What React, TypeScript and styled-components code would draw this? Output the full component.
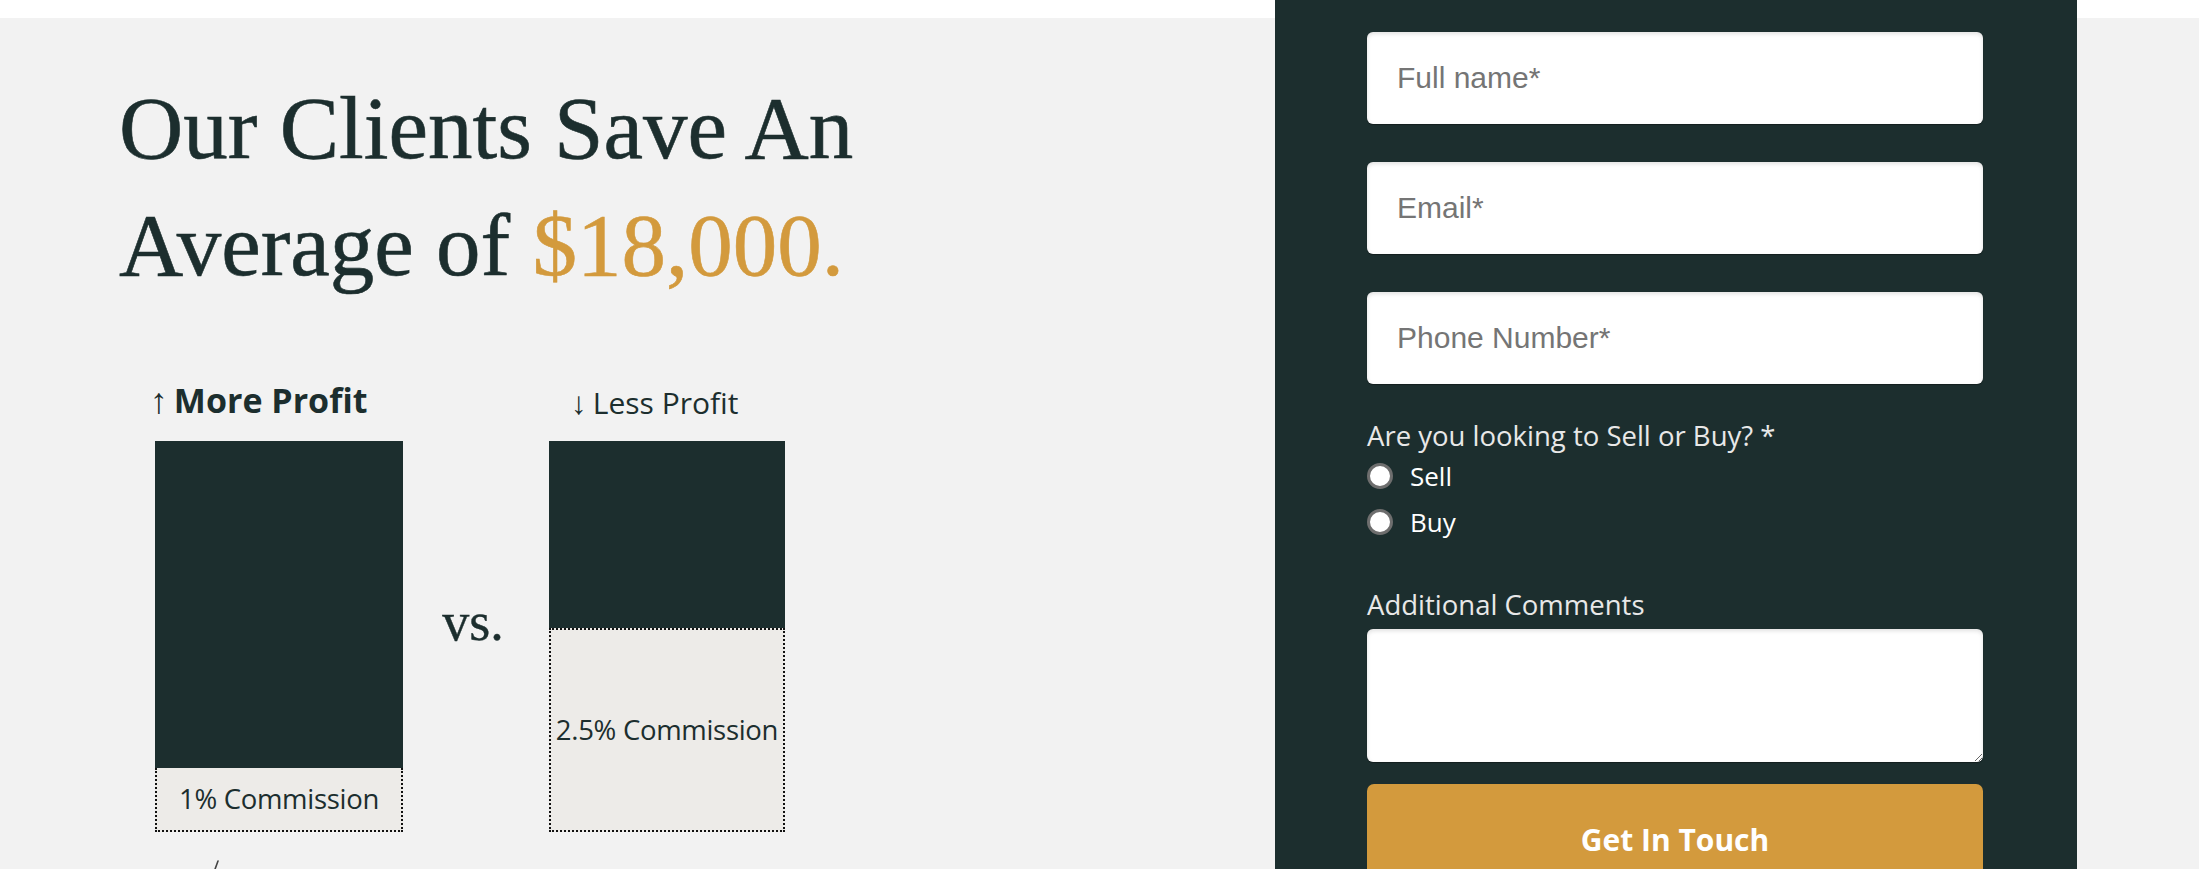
import React from 'react'
import styled, { createGlobalStyle } from 'styled-components'

const GlobalStyle = createGlobalStyle`
  html, body {
    margin: 0;
    padding: 0;
    overflow: hidden;
  }
  * { box-sizing: border-box; }
`

const Page = styled.div`
  display: flex;
  height: 100vh;
  overflow: hidden;
  background: linear-gradient(#ffffff 0 18px, #f2f2f2 18px);
  font-family: "Open Sans", "Noto Sans", sans-serif;
  color: #1c2e2e;
`

const Intro = styled.section`
  flex: 0 0 1275px;
  padding-left: 119px;
`

const Heading = styled.h1`
  margin: 70px 0 0;
  font-family: "Liberation Serif", "Times New Roman", serif;
  font-weight: 400;
  font-size: 89px;
  line-height: 117px;
  color: #1c2e2e;
  -webkit-text-stroke: 0.6px #1c2e2e;
`

const Gold = styled.span`
  color: #d39a3d;
  -webkit-text-stroke: 0.6px #d39a3d;
`

const Chart = styled.div`
  display: grid;
  grid-template-columns: 248px 146px 236px;
  grid-template-rows: auto 391px;
  align-items: end;
  margin: 79px 0 0 36px;
`

const ProfitLabel = styled.div<{ $bold?: boolean; $shift: number }>`
  margin: 0 0 21px ${p => p.$shift}px;
  font-size: ${p => (p.$bold ? 34 : 30)}px;
  font-weight: ${p => (p.$bold ? 700 : 400)};
  line-height: 1;
  white-space: nowrap;
`

const Arrow = styled.span`
  font-family: "Liberation Serif", serif;
  font-weight: 400;
  font-size: 1.05em;
  margin-right: 6px;
`

const Bar = styled.div`
  display: flex;
  flex-direction: column;
  height: 100%;
`

const BarFill = styled.div`
  flex: 1;
  background: #1c2e2e;
`

const Commission = styled.div<{ $height: number; $dottedTop?: boolean }>`
  height: ${p => p.$height}px;
  display: flex;
  align-items: center;
  justify-content: center;
  background: #edebe8;
  border: 2px dotted #111;
  border-top: ${p => (p.$dottedTop ? '2px dotted #111' : 'none')};
  font-size: 27.5px;
  letter-spacing: -0.3px;
  white-space: nowrap;
`

const Versus = styled.div`
  align-self: center;
  justify-self: center;
  margin: 0 6px 28px 0;
  font-family: "Liberation Serif", serif;
  font-size: 54px;
  line-height: 1;
  color: #1c2e2e;
  -webkit-text-stroke: 0.4px #1c2e2e;
`

const Doodle = styled.svg`
  display: block;
  margin: 28px 0 0 92px;
`

const Panel = styled.aside`
  flex: 0 0 802px;
  background: #1c2e2e;
  padding: 32px 94px 0 92px;
  display: flex;
  flex-direction: column;

  & > * {
    flex-shrink: 0;
  }
`

const TextInput = styled.input`
  height: 92px;
  margin-bottom: 38px;
  padding: 0 30px;
  border: none;
  border-radius: 6px;
  background: #ffffff;
  box-shadow: inset 0 2px 4px rgba(0, 0, 0, 0.12), 0 1px 1px rgba(0, 0, 0, 0.35);
  font-family: "Liberation Sans", Arial, sans-serif;
  font-size: 30px;
  color: #333;
  outline: none;

  &::placeholder {
    color: #757575;
  }
`

const FieldLabel = styled.label<{ $top: number }>`
  display: block;
  margin-top: ${p => p.$top}px;
  font-size: 27.5px;
  line-height: 36px;
  color: #e8e8e8;
`

const RadioGroup = styled.div`
  display: flex;
  flex-direction: column;
  margin-top: -1px;
`

const RadioRow = styled.label`
  display: flex;
  align-items: center;
  gap: 17px;
  height: 46px;
  font-size: 26px;
  color: #ffffff;
`

const Radio = styled.input`
  appearance: none;
  width: 26px;
  height: 26px;
  margin: 0;
  border-radius: 50%;
  border: 3px solid #6e6e6e;
  background: #ffffff;
`

const Comments = styled.textarea`
  height: 133px;
  margin-top: 6px;
  border: none;
  border-radius: 6px;
  background: #ffffff;
  box-shadow: inset 0 2px 4px rgba(0, 0, 0, 0.12), 0 1px 1px rgba(0, 0, 0, 0.35);
  outline: none;
  resize: vertical;
`

const Submit = styled.button`
  height: 110px;
  margin-top: 22px;
  border: none;
  border-radius: 7px;
  background: #d39a3d;
  color: #ffffff;
  font-family: "Open Sans", sans-serif;
  font-size: 30px;
  font-weight: 700;
  cursor: pointer;
`

export default function App() {
  return (
    <>
      <GlobalStyle />
      <Page>
        <Intro>
          <Heading>
            Our Clients Save An
            <br />
            Average of <Gold>$18,000.</Gold>
          </Heading>

          <Chart>
            <ProfitLabel $bold $shift={-5}>
              <Arrow>↑</Arrow>More Profit
            </ProfitLabel>
            <div />
            <ProfitLabel $shift={22}>
              <Arrow>↓</Arrow>Less Profit
            </ProfitLabel>

            <Bar>
              <BarFill />
              <Commission $height={64}>1% Commission</Commission>
            </Bar>
            <Versus>vs.</Versus>
            <Bar>
              <BarFill />
              <Commission $height={204} $dottedTop>2.5% Commission</Commission>
            </Bar>
          </Chart>

          <Doodle width="12" height="20" viewBox="0 0 12 20">
            <path d="M7 1 L3 12" stroke="#444" strokeWidth="1.6" fill="none" strokeLinecap="round" />
          </Doodle>
        </Intro>

        <Panel>
          <TextInput type="text" placeholder="Full name*" />
          <TextInput type="email" placeholder="Email*" />
          <TextInput type="tel" placeholder="Phone Number*" />

          <FieldLabel $top={-4}>Are you looking to Sell or Buy? *</FieldLabel>
          <RadioGroup>
            <RadioRow>
              <Radio type="radio" name="intent" value="sell" />
              Sell
            </RadioRow>
            <RadioRow>
              <Radio type="radio" name="intent" value="buy" />
              Buy
            </RadioRow>
          </RadioGroup>

          <FieldLabel $top={42}>Additional Comments</FieldLabel>
          <Comments />

          <Submit type="button">Get In Touch</Submit>
        </Panel>
      </Page>
    </>
  )
}
